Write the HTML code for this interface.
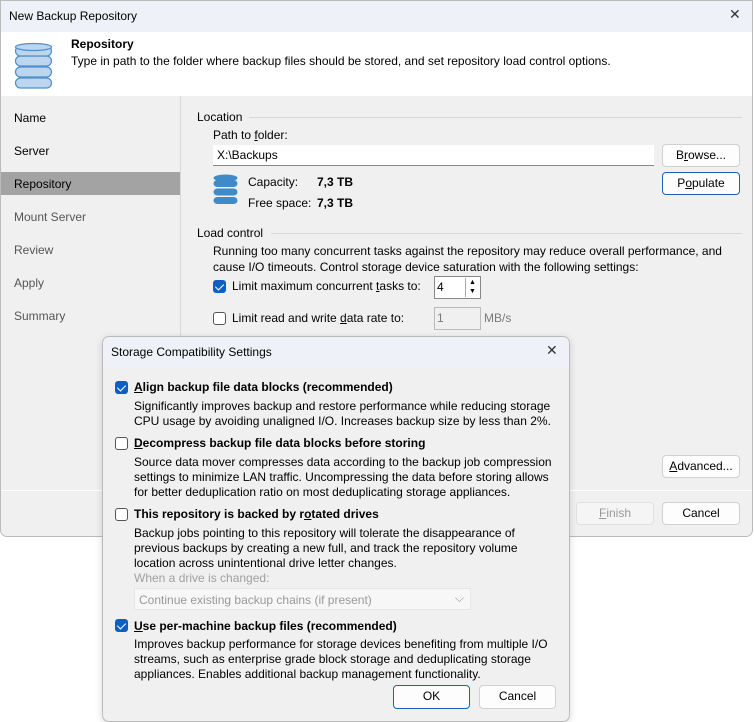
<!DOCTYPE html>
<html><head><meta charset="utf-8"><style>
*{box-sizing:border-box;margin:0;padding:0}
body{width:754px;height:722px;background:#fff;font-family:"Liberation Sans",sans-serif;font-size:12px;color:#000;position:relative;overflow:hidden}
.a{position:absolute;white-space:nowrap}
.btn{position:absolute;background:#fdfdfd;border:1px solid #d0d0d0;border-radius:4px;text-align:center;line-height:20px;font-size:12px}
.cb{position:absolute;width:13px;height:13px;border:1px solid #555;border-radius:3px;background:#fff}
.cb.on{background:#0f5fc2;border-color:#0f5fc2}
.cb.on:after{content:"";position:absolute;left:3px;top:1px;width:4px;height:7px;border:solid #fff;border-width:0 1.5px 1.5px 0;transform:rotate(45deg)}
.g{color:#7a7a7a}
u{text-decoration:underline}
.x{font-size:14px;color:#333;font-family:"DejaVu Sans",sans-serif}
</style></head><body>
<div class="a" style="left:0;top:0;width:753px;height:537px;background:#f0f0f0;border:1px solid #bbb;border-radius:0 0 7px 7px;overflow:hidden">
 <div class="a" style="left:0;top:0;width:753px;height:31px;background:#eef2f8"></div>
 <div class="a" style="left:8px;top:8px">New Backup Repository</div>
 <div class="a x" style="left:728px;top:6px">✕</div>
 <div class="a" style="left:0;top:31px;width:753px;height:64px;background:#fff"></div>
 <svg class="a" style="left:13px;top:41px" width="40" height="50" viewBox="0 0 40 50"><g fill="#bcd6ef" stroke="#4f8fcb" stroke-width="1.2"><rect x="1.5" y="36" width="36" height="10" rx="5"/><rect x="1.5" y="25" width="36" height="10" rx="5"/><rect x="1.5" y="14" width="36" height="10" rx="5"/><rect x="1.5" y="4" width="36" height="10" rx="5"/><ellipse cx="19.5" cy="5" rx="18" ry="3.5"/></g></svg>
 <div class="a" style="left:70px;top:36px;font-weight:bold">Repository</div>
 <div class="a" style="left:70px;top:53px">Type in path to the folder where backup files should be stored, and set repository load control options.</div>
 <div class="a" style="left:179px;top:95px;width:1px;height:394px;background:#d8d8d8"></div>
 <div class="a" style="left:13px;top:110px">Name</div>
 <div class="a" style="left:13px;top:143px">Server</div>
 <div class="a" style="left:0;top:171px;width:179px;height:23px;background:#a3a3a3"></div>
 <div class="a" style="left:13px;top:176px">Repository</div>
 <div class="a" style="left:13px;top:209px;color:#555">Mount Server</div>
 <div class="a" style="left:13px;top:242px;color:#555">Review</div>
 <div class="a" style="left:13px;top:275px;color:#555">Apply</div>
 <div class="a" style="left:13px;top:308px;color:#555">Summary</div>

 <div class="a" style="left:196px;top:109px">Location</div>
 <div class="a" style="left:248px;top:116px;width:493px;height:1px;background:#d8d8d8"></div>
 <div class="a" style="left:212px;top:127px">Path to <u>f</u>older:</div>
 <div class="a" style="left:212px;top:144px;width:441px;height:21px;background:#fff;border-bottom:1px solid #888;padding:3px 4px">X:\Backups</div>
 <div class="btn" style="left:661px;top:143px;width:78px;height:23px">B<u>r</u>owse...</div>
 <div class="btn" style="left:661px;top:171px;width:78px;height:23px;border-color:#1a62b8">P<u>o</u>pulate</div>
 <svg class="a" style="left:212px;top:173px" width="25" height="32" viewBox="0 0 25 32"><g fill="#3f8bc9"><ellipse cx="12.5" cy="4" rx="12" ry="3.5"/><rect x="0.5" y="6" width="24" height="7" rx="4"/><rect x="0.5" y="14.5" width="24" height="7" rx="4"/><rect x="0.5" y="23" width="24" height="7" rx="4"/></g></svg>
 <div class="a" style="left:247px;top:174px">Capacity:</div>
 <div class="a" style="left:316px;top:174px;font-weight:bold">7,3 TB</div>
 <div class="a" style="left:247px;top:195px">Free space:</div>
 <div class="a" style="left:316px;top:195px;font-weight:bold">7,3 TB</div>
 <div class="a" style="left:196px;top:225px">Load control</div>
 <div class="a" style="left:270px;top:232px;width:471px;height:1px;background:#d8d8d8"></div>
 <div class="a" style="left:212px;top:243px">Running too many concurrent tasks against the repository may reduce overall performance, and</div>
 <div class="a" style="left:212px;top:259px">cause I/O timeouts. Control storage device saturation with the following settings:</div>
 <div class="cb on" style="left:212px;top:279px"></div>
 <div class="a" style="left:231px;top:278px">Limit maximum concurrent <u>t</u>asks to:</div>
 <div class="a" style="left:433px;top:275px;width:47px;height:23px;background:#fff;border:1px solid #888;padding:3px 2px">4</div>
 <div class="a" style="left:464px;top:277px;width:14px;height:19px;border-left:1px solid #aaa;font-size:7px;line-height:9px;text-align:center">▲<br>▼</div>
 <div class="cb" style="left:212px;top:311px"></div>
 <div class="a" style="left:231px;top:310px">Limit read and write <u>d</u>ata rate to:</div>
 <div class="a g" style="left:433px;top:306px;width:47px;height:23px;border:1px solid #bbb;padding:3px 2px">1</div>
 <div class="a g" style="left:483px;top:310px">MB/s</div>
 <div class="btn" style="left:661px;top:454px;width:78px;height:23px"><u>A</u>dvanced...</div>
 <div class="a" style="left:0;top:489px;width:753px;height:1px;background:#fff"></div>
 <div class="btn g" style="left:575px;top:501px;width:78px;height:23px;background:#f5f5f5;border-color:#e0e0e0;color:#999"><u>F</u>inish</div>
 <div class="btn" style="left:661px;top:501px;width:78px;height:23px">Cancel</div>
</div>

<div class="a" style="left:102px;top:336px;width:468px;height:386px;background:#f0f0f0;border:1px solid #bbb;border-radius:7px;overflow:hidden;box-shadow:0 2px 8px rgba(0,0,0,.15)">
 <div class="a" style="left:0;top:0;width:468px;height:31px;background:#eef2f8"></div>
 <div class="a" style="left:8px;top:8px">Storage Compatibility Settings</div>
 <div class="a x" style="left:443px;top:6px">✕</div>
 <div class="cb on" style="left:12px;top:44px"></div>
 <div class="a" style="left:31px;top:43px;font-weight:bold"><u>A</u>lign backup file data blocks (recommended)</div>
 <div class="a" style="left:31px;top:62px">Significantly improves backup and restore performance while reducing storage</div>
 <div class="a" style="left:31px;top:77px">CPU usage by avoiding unaligned I/O. Increases backup size by less than 2%.</div>
 <div class="cb" style="left:12px;top:100px"></div>
 <div class="a" style="left:31px;top:99px;font-weight:bold"><u>D</u>ecompress backup file data blocks before storing</div>
 <div class="a" style="left:31px;top:118px">Source data mover compresses data according to the backup job compression</div>
 <div class="a" style="left:31px;top:133px">settings to minimize LAN traffic. Uncompressing the data before storing allows</div>
 <div class="a" style="left:31px;top:148px">for better deduplication ratio on most deduplicating storage appliances.</div>
 <div class="cb" style="left:12px;top:171px"></div>
 <div class="a" style="left:31px;top:170px;font-weight:bold">This repository is backed by r<u>o</u>tated drives</div>
 <div class="a" style="left:31px;top:189px">Backup jobs pointing to this repository will tolerate the disappearance of</div>
 <div class="a" style="left:31px;top:204px">previous backups by creating a new full, and track the repository volume</div>
 <div class="a" style="left:31px;top:219px">location across unintentional drive letter changes.</div>
 <div class="a" style="left:31px;top:234px;color:#a0a0a0">When a drive is changed:</div>
 <div class="a" style="left:31px;top:251px;width:337px;height:22px;background:#f7f7f7;border:1px solid #e6e6e6;color:#999;padding:4px 4px">Continue existing backup chains (if present)<span style="position:absolute;right:6px;top:2px">⌵</span></div>
 <div class="cb on" style="left:12px;top:282px"></div>
 <div class="a" style="left:31px;top:282px;font-weight:bold"><u>U</u>se per-machine backup files (recommended)</div>
 <div class="a" style="left:31px;top:300px">Improves backup performance for storage devices benefiting from multiple I/O</div>
 <div class="a" style="left:31px;top:315px">streams, such as enterprise grade block storage and deduplicating storage</div>
 <div class="a" style="left:31px;top:330px">appliances. Enables additional backup management functionality.</div>
 <div class="btn" style="left:290px;top:348px;width:77px;height:24px;border-color:#1a62b8">OK</div>
 <div class="btn" style="left:376px;top:348px;width:77px;height:24px">Cancel</div>
</div>
</body></html>
